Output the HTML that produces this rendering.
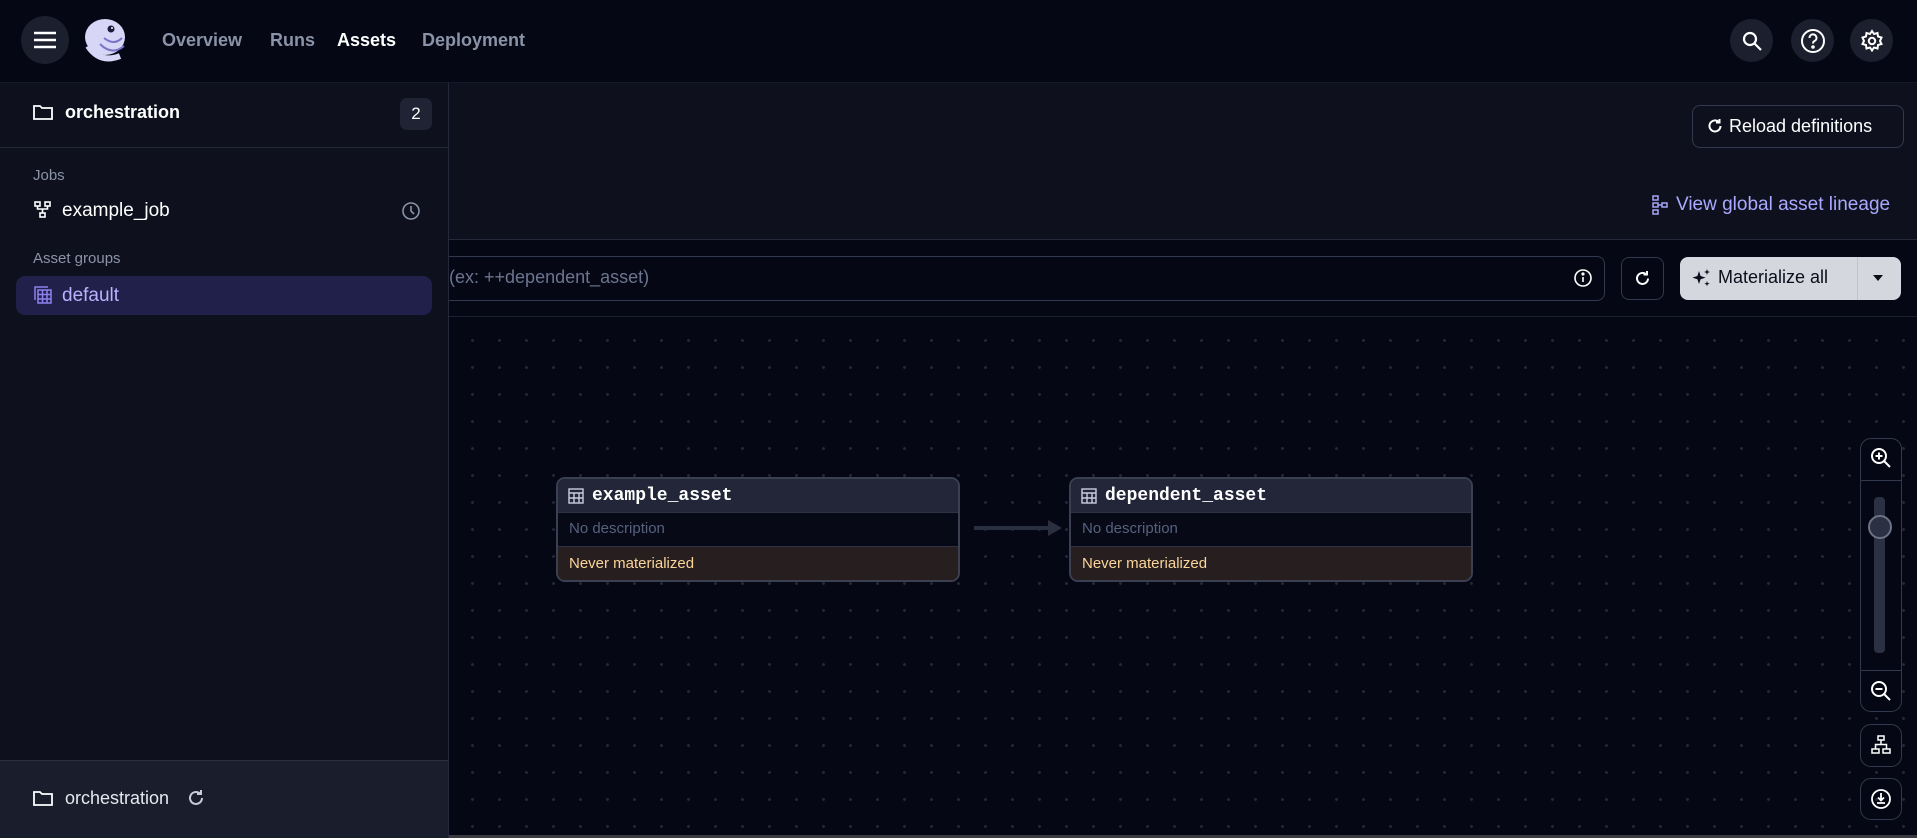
<!DOCTYPE html>
<html><head><meta charset="utf-8"><style>
*{box-sizing:border-box;margin:0;padding:0}
body{width:1917px;height:838px;overflow:hidden;background:#050814;font-family:"Liberation Sans",sans-serif;position:relative;color:#fff}
.abs{position:absolute}
.hdr{left:0;top:0;width:1917px;height:83px;background:#050814;border-bottom:1px solid #151a2a}
.circ{position:absolute;border-radius:50%;background:#1b1f2e;display:flex;align-items:center;justify-content:center}
.nav{position:absolute;top:30px;font-size:18px;font-weight:700;color:#8a93a8}
.side{left:0;top:83px;width:449px;height:755px;background:#0e111d;border-right:1px solid #23283a;z-index:5}
.main-top{left:449px;top:83px;width:1468px;height:157px;background:#0e111d;border-bottom:1px solid #23283a}
.canvas{left:449px;top:317px;width:1468px;height:521px;background-color:#050814;background-image:radial-gradient(circle,#232838 1.3px,transparent 1.6px);background-size:27px 27px;background-position:10px 10px}
.node{position:absolute;width:404px;height:105px;border:2px solid #3a3f52;border-radius:9px;overflow:hidden;background:#070a16}
.node .h{height:34px;background:#222638;display:flex;align-items:center;padding-left:10px;font-family:"Liberation Mono",monospace;font-weight:700;font-size:18px;color:#fff;border-bottom:1px solid #2d3244}
.node .d{height:33px;padding-left:11px;line-height:32px;font-size:15px;color:#56617e}
.node .s{height:36px;background:#271e1f;padding-left:11px;line-height:34px;font-size:15px;color:#fbd59a;border-top:1px solid #2d3244}
.btn{position:absolute;border:1px solid #33394c;border-radius:8px}
</style></head><body>
<div class="abs hdr"></div>
<div class="circ" style="left:21px;top:16px;width:48px;height:48px">
<svg width="24" height="20"><g stroke="#fff" stroke-width="2.6"><line x1="1" y1="3" x2="23" y2="3"/><line x1="1" y1="10" x2="23" y2="10"/><line x1="1" y1="17" x2="23" y2="17"/></g></svg></div>
<svg class="abs" style="left:80px;top:16px" width="50" height="50" viewBox="0 0 50 50"><ellipse cx="25" cy="21" rx="20" ry="18" fill="#d8d6f7"/><path d="M8 30 Q20 48 40 40" stroke="#d8d6f7" stroke-width="6" fill="none"/><path d="M20 28 Q32 40 44 30 M24 22 Q34 30 42 22" stroke="#7a74c8" stroke-width="2" fill="none"/><circle cx="31" cy="13" r="3.5" fill="#1b1a3a"/><circle cx="32" cy="12" r="1" fill="#fff"/></svg>
<div class="nav" style="left:162px">Overview</div>
<div class="nav" style="left:270px">Runs</div>
<div class="nav" style="left:337px;color:#fff">Assets</div>
<div class="nav" style="left:422px">Deployment</div>
<div class="circ" style="left:1730px;top:19px;width:43px;height:43px"><svg width="22" height="22" fill="none" stroke="#fff" stroke-width="2.2"><circle cx="9" cy="9" r="6"/><line x1="13.5" y1="13.5" x2="20" y2="20"/></svg></div>
<div class="circ" style="left:1791px;top:19px;width:43px;height:43px"><svg width="26" height="26" fill="none" stroke="#fff" stroke-width="2"><circle cx="13" cy="13" r="11"/><path d="M9.5 10a3.5 3.5 0 1 1 5 3c-1.2.6-1.5 1.3-1.5 2.5"/><circle cx="13" cy="19" r=".8" fill="#fff"/></svg></div>
<div class="circ" style="left:1850px;top:19px;width:43px;height:43px"><svg width="24" height="24" viewBox="0 0 24 24" fill="none" stroke="#fff" stroke-width="2"><circle cx="12" cy="12" r="3.2"/><path d="M12 2l2 3 3.5-1 .5 3.5 3.5 1-1.5 3.5 1.5 3-3.5 1-.5 3.5-3.5-1-2 3-2-3-3.5 1-.5-3.5-3.5-1L4 12 2.5 8.5l3.5-1L6.5 4 10 5z"/></svg></div>

<div class="abs side">
 <svg class="abs" style="left:32px;top:20px" width="22" height="18" fill="none" stroke="#fff" stroke-width="1.8"><path d="M2 3h6l2 2h10v11H2z"/></svg>
 <div class="abs" style="left:65px;top:19px;font-size:18px;font-weight:700">orchestration</div>
 <div class="abs" style="left:400px;top:15px;width:32px;height:32px;background:#1f2333;border-radius:7px;text-align:center;line-height:32px;font-size:17px">2</div>
 <div class="abs" style="left:0;top:64px;width:449px;height:1px;background:#23283a"></div>
 <div class="abs" style="left:33px;top:84px;font-size:15px;color:#8a93a8">Jobs</div>
 <svg class="abs" style="left:34px;top:118px" width="18" height="18" fill="none" stroke="#fff" stroke-width="1.6"><rect x="1" y="1" width="5" height="4"/><rect x="11" y="1" width="5" height="4"/><rect x="6" y="12" width="5" height="4"/><path d="M3.5 5v3h10V5M8.5 8v4"/></svg>
 <div class="abs" style="left:62px;top:117px;font-size:19px">example_job</div>
 <svg class="abs" style="left:401px;top:118px" width="20" height="20" fill="none" stroke="#8a93a8" stroke-width="1.6"><circle cx="10" cy="10" r="8"/><path d="M10 5v5l3 3"/></svg>
 <div class="abs" style="left:33px;top:167px;font-size:15px;color:#8a93a8">Asset groups</div>
 <div class="abs" style="left:16px;top:193px;width:416px;height:39px;background:#21204b;border-radius:9px"></div>
 <svg class="abs" style="left:34px;top:203px" width="18" height="18" fill="none" stroke="#8b82ee" stroke-width="1.5"><path d="M1 14V1h13"/><rect x="4" y="4" width="13" height="13"/><path d="M4 8.5h13M4 13h13M8.5 4v13M13 4v13"/></svg>
 <div class="abs" style="left:62px;top:202px;font-size:19px;color:#b8b2ff">default</div>
 <div class="abs" style="left:0;top:677px;width:448px;height:78px;background:#1a1d2c;border-top:1px solid #2b3042"></div>
 <svg class="abs" style="left:32px;top:706px" width="22" height="18" fill="none" stroke="#fff" stroke-width="1.8"><path d="M2 3h6l2 2h10v11H2z"/></svg>
 <div class="abs" style="left:65px;top:705px;font-size:18px;color:#e6e8ef">orchestration</div>
 <svg class="abs" style="left:187px;top:706px" width="18" height="18" fill="none" stroke="#c8ccd8" stroke-width="2"><path d="M15 9a6 6 0 1 1-2-4.5"/><path d="M14 1v4h-4"/></svg>
</div>

<div class="abs main-top"></div>
<div class="btn" style="left:1692px;top:105px;width:212px;height:43px"></div>
<svg class="abs" style="left:1707px;top:118px" width="16" height="16" fill="none" stroke="#fff" stroke-width="2"><path d="M13.5 8a5.5 5.5 0 1 1-2-4.3"/><path d="M12.5 1v3.5H9"/></svg>
<div class="abs" style="left:1729px;top:116px;font-size:18px;color:#fff">Reload definitions</div>
<svg class="abs" style="left:1652px;top:195px" width="17" height="20" fill="none" stroke="#a7a5f5" stroke-width="1.5"><rect x="1" y="1" width="5" height="4"/><rect x="1" y="8" width="5" height="4"/><rect x="1" y="15" width="5" height="4"/><rect x="10" y="8" width="5" height="4"/><path d="M6 10h4"/></svg>
<div class="abs" style="left:1676px;top:194px;font-size:19px;color:#a9a9ff">View global asset lineage</div>

<div class="abs" style="left:449px;top:240px;width:1468px;height:77px;background:#050814;border-bottom:1px solid #1c2131"></div>
<div class="abs" style="left:430px;top:256px;width:1175px;height:45px;border:1px solid #33394c;border-radius:8px;background:#050814"></div>
<div class="abs" style="left:449px;top:267px;font-size:18px;color:#6b7590">(ex: ++dependent_asset)</div>
<svg class="abs" style="left:1573px;top:268px" width="20" height="20" fill="none" stroke="#fff" stroke-width="1.6"><circle cx="10" cy="10" r="8"/><path d="M10 9v5"/><circle cx="10" cy="6" r=".8" fill="#fff"/></svg>
<div class="btn" style="left:1621px;top:257px;width:43px;height:43px"></div>
<svg class="abs" style="left:1634px;top:270px" width="17" height="17" fill="none" stroke="#fff" stroke-width="2"><path d="M14 8.5a5.5 5.5 0 1 1-2-4.3"/><path d="M13 1v3.5H9.5"/></svg>
<div class="abs" style="left:1680px;top:257px;width:221px;height:43px;background:#d4d7de;border-radius:8px"></div>
<div class="abs" style="left:1857px;top:257px;width:1px;height:43px;background:#bfc3cc"></div>
<svg class="abs" style="left:1691px;top:267px" width="22" height="22" fill="#0b0e1a"><path d="M8 4l1.6 5 5 1.6-5 1.6L8 17l-1.6-4.8-5-1.6 5-1.6z"/><path d="M16 2l.8 2.2 2.2.8-2.2.8L16 8l-.8-2.2L13 5l2.2-.8z"/><path d="M16 14l.7 2 2 .7-2 .7-.7 2-.7-2-2-.7 2-.7z"/></svg>
<div class="abs" style="left:1718px;top:267px;font-size:18px;color:#0b0e1a">Materialize all</div>
<svg class="abs" style="left:1873px;top:275px" width="10" height="6"><path d="M0 0h10L5 6z" fill="#0b0e1a"/></svg>

<div class="abs canvas"></div>
<div class="abs" style="left:974px;top:526px;width:78px;height:4px;background:#2a2f40"></div>
<svg class="abs" style="left:1048px;top:520px" width="14" height="16"><path d="M0 0l14 8-14 8z" fill="#2a2f40"/></svg>
<div class="node" style="left:556px;top:477px">
 <div class="h"><svg width="16" height="16" fill="none" stroke="#ccd" stroke-width="1.4" style="margin-right:8px"><rect x="1" y="1" width="14" height="14"/><path d="M1 5h14M1 10h14M6 5v10M11 5v10"/></svg>example_asset</div>
 <div class="d">No description</div><div class="s">Never materialized</div></div>
<div class="node" style="left:1069px;top:477px">
 <div class="h"><svg width="16" height="16" fill="none" stroke="#ccd" stroke-width="1.4" style="margin-right:8px"><rect x="1" y="1" width="14" height="14"/><path d="M1 5h14M1 10h14M6 5v10M11 5v10"/></svg>dependent_asset</div>
 <div class="d">No description</div><div class="s">Never materialized</div></div>

<div class="btn" style="left:1860px;top:438px;width:42px;height:274px;background:#050814;border-radius:11px"></div>
<div class="abs" style="left:1860px;top:480px;width:42px;height:1px;background:#33394c"></div>
<div class="abs" style="left:1860px;top:670px;width:42px;height:1px;background:#33394c"></div>
<svg class="abs" style="left:1869px;top:446px" width="24" height="24" fill="none" stroke="#fff" stroke-width="2"><circle cx="10" cy="10" r="7"/><path d="M15 15l6 6M10 6.5v7M6.5 10h7"/></svg>
<div class="abs" style="left:1874px;top:497px;width:11px;height:156px;background:#2b3142;border-radius:4px"></div>
<div class="abs" style="left:1868px;top:515px;width:24px;height:24px;border-radius:50%;background:#2b3142;border:2px solid #6c7387"></div>
<svg class="abs" style="left:1869px;top:679px" width="24" height="24" fill="none" stroke="#fff" stroke-width="2"><circle cx="10" cy="10" r="7"/><path d="M15 15l6 6M6.5 10h7"/></svg>
<div class="btn" style="left:1860px;top:724px;width:42px;height:43px;border-radius:11px"></div>
<svg class="abs" style="left:1871px;top:735px" width="20" height="20" fill="none" stroke="#fff" stroke-width="1.5"><rect x="7" y="1" width="6" height="4"/><rect x="1" y="14" width="7" height="4"/><rect x="12" y="14" width="7" height="4"/><path d="M10 5v4M4.5 14V9.5h11V14"/></svg>
<div class="btn" style="left:1860px;top:778px;width:42px;height:42px;border-radius:11px"></div>
<svg class="abs" style="left:1870px;top:788px" width="22" height="22" fill="none" stroke="#fff" stroke-width="1.8"><circle cx="11" cy="11" r="9"/><path d="M11 5v7M8 9.5l3 3 3-3M7 15h8"/></svg>
<div class="abs" style="left:449px;top:835px;width:1468px;height:3px;background:#3a3a40"></div>
</body></html>
